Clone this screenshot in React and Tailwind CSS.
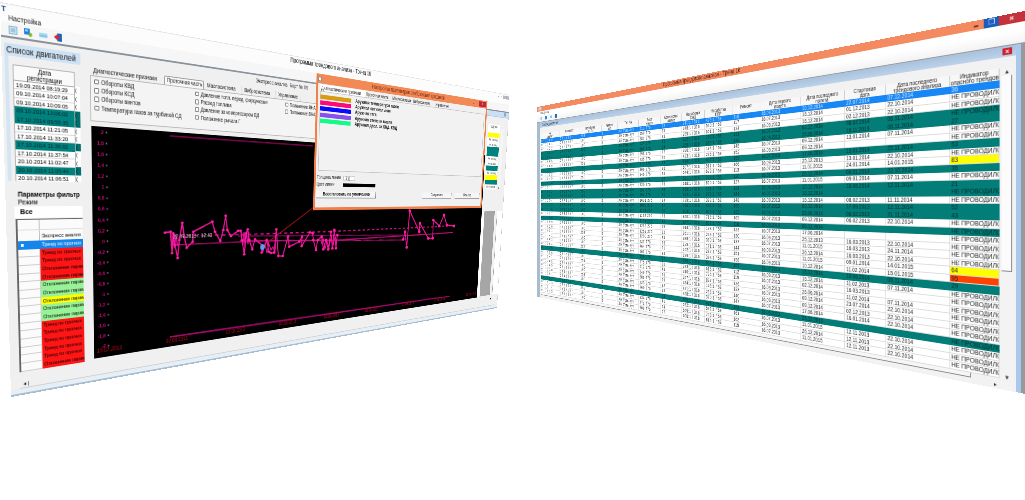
import React from "react";

/* ---------- perspective helpers ---------- */
// Builds the projective map of a w×h panel onto the quad [TL, TR, BR, BL].
function projection(w, h, [p0, p1, p2, p3]) {
  const dx1 = p1[0] - p2[0], dy1 = p1[1] - p2[1];
  const dx2 = p3[0] - p2[0], dy2 = p3[1] - p2[1];
  const sx = p0[0] - p1[0] + p2[0] - p3[0];
  const sy = p0[1] - p1[1] + p2[1] - p3[1];
  const den = dx1 * dy2 - dx2 * dy1;
  const g = (sx * dy2 - dx2 * sy) / den;
  const k = (dx1 * sy - sx * dy1) / den;
  const a = p1[0] - p0[0] + g * p1[0], b = p3[0] - p0[0] + k * p3[0], c = p0[0];
  const d = p1[1] - p0[1] + g * p1[1], e = p3[1] - p0[1] + k * p3[1], f = p0[1];
  const m = [a / w, d / w, 0, g / w, b / h, e / h, 0, k / h, 0, 0, 1, 0, c, f, 0, 1];
  return {
    css: `matrix3d(${m.map((n) => n.toFixed(10)).join(",")})`,
    toPanel: (x, y) => {
      const A = a - g * x, B = b - k * x, C = x - c;
      const D = d - g * y, E = e - k * y, F = y - f;
      const det = A * E - B * D;
      return [((C * E - B * F) / det) * w, ((A * F - D * C) / det) * h];
    },
  };
}

const LEFT = projection(960, 400, [[0, 2], [510, 95], [497, 308], [11, 397]]);
const RIGHT = projection(983, 383, [[537, 107], [1025, 11], [1025, 394], [537, 297]]);

/* ---------- left window ---------- */
const launches = [
  ["19.09.2014 08:19:29", 0, 1], ["09.10.2014 10:07:04", 0, 0], ["09.10.2014 10:09:05", 0, 0],
  ["09.10.2014 13:06:02", 1, 0], ["17.10.2014 09:55:35", 1, 0], ["17.10.2014 11:21:05", 0, 0],
  ["17.10.2014 11:33:20", 0, 0], ["17.10.2014 11:36:02", 1, 0], ["17.10.2014 11:37:54", 0, 0],
  ["20.10.2014 11:02:47", 0, 1], ["20.10.2014 11:05:44", 1, 0], ["20.10.2014 11:06:51", 0, 0],
];

const R = "bg-[#ff1515]", G = "bg-[#98f298]", Y = "bg-[#ffff00]";
const alarms = [
  [R, "Тренд по прогноз"], [R, "Тренд по прогноз"], [R, "Отклонение парам"], [R, "Отклонение парам"],
  [G, "Отклонение парам"], [G, "Отклонение парам"], [Y, "Отклонение парам"], [G, "Отклонение парам"], [G, "Отклонение парам"],
  [R, "Тренд по прогноз"], [R, "Тренд по прогноз"], [R, "Тренд по прогноз"], [R, "Тренд по прогноз"], [R, "Тренд по прогноз"], [R, "Отклонение парам"],
];

function Toolbar() {
  return (
    <div className="flex h-[13px] items-center gap-[7px] bg-[#f6f6f6] pl-[8px]">
      <svg className="h-[8px] w-[9px]" viewBox="0 0 9 8"><rect x=".5" y=".5" width="8" height="7" fill="#d4eaf5" stroke="#8db7cc" /><path d="M2 3h5M2 5h5" stroke="#6aa3c0" /></svg>
      <svg className="h-[8px] w-[9px]" viewBox="0 0 9 8"><rect width="6" height="6" fill="#1d83dd" /><rect x="1" y="1" width="3" height="2" fill="#8fd0ff" /><circle cx="6.5" cy="5.8" r="2" fill="#79b82c" /></svg>
      <svg className="h-[8px] w-[9px]" viewBox="0 0 9 8"><rect y="2" width="9" height="4.5" rx="1" fill="#a9d8f2" /><path d="M0 5h9" stroke="#5ab4e4" /></svg>
      <svg className="h-[8px] w-[9px]" viewBox="0 0 9 8"><rect x="4" width="5" height="8" fill="#1565b8" /><path d="M0 4l4-3v2h3v2h-3v2z" fill="#e8202a" /></svg>
    </div>
  );
}

function LaunchList() {
  return (
    <div className="ml-[3px] mt-[5px] flex h-[136px] w-[83px] flex-col overflow-hidden bg-[#f0f0f0]">
      <div className="h-[12px] shrink-0 bg-[#cfe2f4] pl-[2px] text-[8.6px] leading-[12px] text-[#111]">Список двигателей</div>
      <div className="flex grow border-l-[4px] border-[#d3e4f5] pl-[4px] pt-[8px]">
        <div className="w-[68px] overflow-hidden border border-b-0 border-[#b5b5b5] bg-white">
          <div className="flex h-[14.5px] flex-col items-center border-b border-[#aaa] bg-[#fafafa] text-[6.6px] leading-[7px]">
            <span>Дата</span><span>регистрации</span>
          </div>
          {launches.map(([t, teal]) => (
            <div key={t} className={`h-[8.5px] border-b pl-[2px] text-[6.2px] leading-[8.2px] ${teal ? "border-[#007f7c] bg-[#008380] text-[#022]" : "border-[#d8d8d8] text-black"}`}>{t}</div>
          ))}
        </div>
        <div className="mt-[15px] w-[6px] overflow-hidden">
          {launches.map(([t, teal]) => (
            <div key={t} className={`h-[8.5px] text-[6px] leading-[8px] ${teal ? "bg-[#00706e]" : "bg-white"}`}>(</div>
          ))}
        </div>
      </div>
    </div>
  );
}

function FilterPanel() {
  return (
    <div className="mt-[9px] h-[30px] pl-[13px]">
      <div className="text-[7.2px] font-bold leading-[9px] text-black">Параметры фильтр</div>
      <div className="text-[7px] leading-[7px]">Режим</div>
      <div className="ml-[-4px] mt-px h-[12px] bg-white pl-[6px] text-[7.5px] font-bold leading-[12px]">Все</div>
    </div>
  );
}

function AlarmTable() {
  return (
    <div className="ml-[10px] w-[76px] overflow-hidden border-l-2 border-t border-[#666] bg-[#fbfbfb]">
      <div className="flex h-[11px] border-b border-[#ddd]"><div className="w-[24px] shrink-0 border-r border-[#bbb]" /></div>
      <div className="flex h-[11px]"><div className="w-[24px] shrink-0 border-r border-[#bbb]" /><div className="pl-[2px] text-[5.8px] leading-[12px]">Экспресс анализ</div></div>
      <div className="flex h-[8.67px] bg-[#1485ea]">
        <div className="flex w-[24px] shrink-0 items-center pl-[3px]"><div className="h-[3px] w-[3px] bg-white" /></div>
        <div className="pl-[2px] text-[5.7px] leading-[8.6px] text-white">Тренд по прогноз</div>
      </div>
      {alarms.map(([c, t], i) => (
        <div key={i} className="flex h-[8.67px]">
          <div className="w-[24px] shrink-0 border-b border-r border-[#ccc]" />
          <div className={`grow pl-[2px] text-[5.6px] leading-[8.6px] text-black ${c}`}>{t}</div>
        </div>
      ))}
    </div>
  );
}

function CheckItem({ children }) {
  return (
    <div className="flex h-[9.3px] items-center gap-[3px]">
      <div className="h-[5.5px] w-[5.5px] rounded-[1px] border border-[#777] bg-white" />
      <span>{children}</span>
    </div>
  );
}

function SignTabs() {
  return (
    <div className="ml-[11px] mr-[10px] text-[6.6px] text-[#111]">
      <div className="flex h-[10px] items-center pl-[4px] leading-[10px]">
        <span className="w-[92px] text-[6.6px]">Диагностические признаки</span>
        <span className="h-[10px] w-[58px] rounded-t-[2px] border border-b-0 border-[#999] bg-[#f8f8f8] pl-[3px] leading-[8px]">Проточная часть</span>
        <span className="ml-[5px] w-[54px]">Маслосистема</span>
        <span className="w-[59px] border-l border-[#ccc] pl-[5px]">Вибросистема</span>
        <span className="border-x border-[#ccc] px-[5px]">Управление</span>
      </div>
      <div className="grid h-[49px] grid-cols-[136px_150px_200px] content-start items-start border border-[#b8b8b8] bg-[#f4f4f4] pl-[4px] pt-px">
        <div>
          <CheckItem>Обороты КВД</CheckItem><CheckItem>Обороты КСД</CheckItem><CheckItem>Обороты винтов</CheckItem>
          <CheckItem>Температура газов за турбиной СД</CheckItem>
        </div>
        <div>
          <CheckItem>Давление топл. перед. форсунками</CheckItem><CheckItem>Расход топлива</CheckItem>
          <CheckItem>Давление за компрессором ВД</CheckItem><CheckItem>Положение рычага Г</CheckItem>
        </div>
        <div><CheckItem>Положение ВНА КНД</CheckItem><CheckItem>Положение ВНА КВД</CheckItem></div>
      </div>
    </div>
  );
}

const trend = [
  [165, 232.7], [170.7, 231.7], [172, 253], [173.3, 233.3], [175, 245], [177.7, 258], [179.3, 240], [182.3, 222.7], [184.3, 236.7],
  [186.7, 247.7], [192.7, 241.7], [193.3, 231.7], [212.3, 221.7], [215, 231.7], [220.3, 241], [223.3, 230], [225.7, 215.7], [227.3, 230],
  [231, 236], [238.3, 230.7], [240.7, 230.7], [242, 240], [244.3, 254.3], [246, 233.3], [247.7, 229.3], [249.3, 240], [252.3, 249.3],
  [255, 239.3], [262, 245], [261.7, 252.7], [266.7, 240], [269, 251.7], [271, 253], [274, 252.7], [276.3, 229.3], [278.3, 256], [282.7, 256],
  [288, 236.7], [289.3, 246.7], [299.3, 241.7], [302, 236.7], [301.7, 246], [310, 232.3], [312.7, 233.3], [313.3, 240], [316, 250],
  [317.7, 240], [321.7, 236.7], [323.3, 249.3], [326, 240], [328.3, 249.3], [331, 231.7], [332.3, 248.3], [334.3, 230], [336, 248.3], [337.3, 235],
];
const trendEnd = [
  [403.3, 239.3], [405, 231.7], [406.7, 247.3], [409.7, 210.7], [419.3, 231.7], [420, 223.3], [428.3, 238.3], [432.7, 238.3], [433.3, 220],
  [439.3, 226], [444, 215], [446.7, 225], [454, 226],
];
const clusters = [
  [[170.5, 233], [172, 250], [173, 236], [174.5, 248], [176, 234], [177.5, 246]],
  [[241, 232], [243, 245], [244, 232], [245, 248], [246.5, 234], [248, 244], [249, 232]],
  [[261, 247], [263, 251], [265, 244], [267, 253], [268.5, 243], [271, 250], [273, 247], [275, 252], [276, 240]],
  [[321, 244], [323, 238], [325, 249], [327, 241], [329, 247], [331, 238], [333, 246], [335, 236], [337, 242]],
];
const dates = [[97, 353], [166, 343], [226, 333.5], [279, 325.5], [324, 318.5], [365, 312], [402, 306], [434, 301.5], [466, 296]];

function Chart() {
  const at = (x, y) => {
    const [u, v] = LEFT.toPanel(x, y);
    return [u - 98, v - 113];
  };
  const line = (pts) => pts.map(([x, y]) => at(x, y).map((n) => n.toFixed(1)).join(",")).join(" ");
  const dot = (p, i) => {
    const [x, y] = at(p[0], p[1]);
    const r = 1.9 + x / 420;
    return <ellipse key={i} cx={x} cy={y} rx={r} ry={r * 0.7} fill="#ff1fa6" />;
  };
  const [bx, by] = at(262.5, 247);
  const [lx, ly] = at(173, 236);
  return (
    <svg className="ml-[12px] mt-[3px] block h-[259.5px] w-[789px] bg-black" viewBox="0 0 789 259.5" fontFamily="Liberation Sans, sans-serif">
      {Array.from({ length: 21 }, (_, i) => (
        <g key={i} fontSize="6" fontWeight="700">
          <text x="15" y={8 + i * 12.07} textAnchor="end" fill="#d4067e">{((10 - i) / 5).toFixed(1).replace(".0", "").replace(".", ",")}</text>
          <circle cx="18.5" cy={6 + i * 12.07} r="1" fill="#777" />
        </g>
      ))}
      <polyline points={line([[170, 136], [313, 146]])} fill="none" stroke="#7c064c" strokeWidth="1.6" />
      <polyline points={line([[170, 337], [450, 296]])} fill="none" stroke="#a0086a" strokeWidth="2.2" />
      <polyline points={line([[170, 245], [260, 241], [403, 240]])} fill="none" stroke="#c00e7e" strokeWidth="1.3" />
      <polyline points={line([[240, 241], [338, 240], [453, 232.5]])} fill="none" stroke="#c00e7e" strokeWidth="1.8" />
      <polyline points={line([[238, 236], [403, 235]])} fill="none" stroke="#8d0a5e" strokeWidth="1.4" />
      <polyline points={line([[172, 236], [245, 234.5], [330, 231.5], [450, 226]])} fill="none" stroke="#cf1288" strokeWidth="1.8" strokeDasharray="6 5" />
      <polyline points={line([[314, 207], [264, 245]])} fill="none" stroke="#a31420" strokeWidth="1.4" />
      <polyline points={line(trend)} fill="none" stroke="#f0169c" strokeWidth="1.9" />
      <polyline points={line(trendEnd)} fill="none" stroke="#e0148f" strokeWidth="2.5" />
      {clusters.map((c, i) => <polyline key={i} points={line(c)} fill="none" stroke="#f0169c" strokeWidth="1.6" />)}
      {trend.map(dot)}
      {trendEnd.map(dot)}
      <circle cx={bx} cy={by} r="4" fill="#5a9cf0" />
      <text x={lx} y={ly + 3} fontSize="7" fill="#c8c8c8">22.07.2013 г. 12:43</text>
      {dates.map(([x, y], i) => {
        const [u, v] = at(x, y);
        return <text key={i} x={Math.min(u, 752)} y={v} fontSize="6.5" fill="#c00c16">{i ? "02.08.2013" : "19.07.2013"}</text>;
      })}
    </svg>
  );
}

function RightStrip() {
  return (
    <div className="flex w-[73px] flex-col border-r border-[#c5ccd4]">
      <div className="flex h-[10px] items-center justify-end border-b border-[#aac8e8] bg-[#c9dff3] pr-[8px]">
        <div className="h-[6px] w-[8px] bg-[#8ea9c6]" />
      </div>
      <div className="mt-[14px] flex h-[117px] pl-[5px]">
        <div className="w-[40px] overflow-hidden bg-white text-[6px] leading-[8.4px] text-[#555]">
          <div className="h-[15px] text-center text-[7px] leading-[7.5px] text-[#333]">Бортов</div>
          {launches.map(([t, teal, yellow]) => (
            <div key={t} className={`h-[8.5px] text-center ${teal ? "bg-[#008380]" : yellow ? "bg-[#ffff00]" : "bg-white"}`}>{teal || yellow ? "" : "Не провод"}</div>
          ))}
        </div>
        <div className="ml-[5px] flex w-[8px] flex-col justify-between bg-[#f6f6f6] text-[5px] leading-[6px] text-[#555]"><span>▲</span><span>▼</span></div>
      </div>
      <div className="mt-[40px] flex h-[160px] bg-white">
        <div className="ml-[9px] w-[34px] bg-[#a6a6a6]" />
        <div className="w-[10px] border-x border-[#999] bg-[#f2f2f2]" />
      </div>
      <div className="flex h-[12px] items-end justify-end bg-[#f0f0f0] pr-[22px] text-[6px] leading-[9px]">▸</div>
    </div>
  );
}

const series = [
  ["bg-[#d99b12]", "Аружная температура газов"], ["bg-[#ff0a78]", "Аружная оптимальная"], ["bg-[#0a0aff]", "Аружная тяга"],
  ["bg-[#8850ee]", "Аружная степени масла"], ["bg-[#14fa88]", "Аружная давл. за КНД. КВД"],
];

function SettingsDialog() {
  return (
    <div className="absolute left-[447px] top-[17.5px] flex h-[190px] w-[438px] flex-col border-[4px] border-t-0 border-[#f08048] bg-[#f0f0f0] text-[6.8px] text-[#111]">
      <div className="flex h-[13px] shrink-0 items-center bg-[#f28a56]">
        <div className="mt-[2px] h-[6px] w-[6px] border border-[#4c92c8] bg-white" />
        <div className="grow pl-[24px] text-center text-[8.6px] leading-[12px] text-[#7c2c12]">Настройка параметров отображения графиков</div>
        <div className="flex gap-[10px] pr-[3px] text-[7px] leading-[7px] text-[#6b2a12]"><span>–</span><span>▫</span></div>
        <div className="h-[9px] w-[22px] bg-[#c2263c] text-center text-[7px] leading-[8px] text-white">×</div>
      </div>
      <div className="mx-[4px] mt-[1px] flex h-[9px] items-center leading-[9px]">
        <span className="w-[97px] bg-white pl-[2px]">Диагностические признаки</span>
        <span className="w-[64px] pl-px">Проточная часть</span>
        <span className="w-[53px]">Маслосистема</span>
        <span className="w-[60px]">Вибросистема</span>
        <span>Управление</span>
      </div>
      <div className="mx-[4px] flex h-[111px] flex-col gap-[2.2px] border border-[#c4c4c4] bg-[#f2f2f2] pt-[4px] text-[7.4px] font-bold">
        {series.map(([c, t]) => (
          <div key={c} className="flex h-[6.2px] items-center"><div className={`mr-[9px] h-[6.2px] w-[65px] ${c}`} /><span className="leading-[6px] text-[#222]">{t}</span></div>
        ))}
      </div>
      <div className="ml-[2px] mt-[5px] flex h-[10px] items-center text-[7px]"><span className="w-[56px]">Толщина линии</span><span className="h-[7px] w-[26px] border border-[#ccc] bg-white pl-[4px] leading-[6px]">3 ▯</span></div>
      <div className="ml-[2px] flex h-[10px] items-center text-[7px]"><span className="w-[56px]">Цвет линии</span><span className="h-[5.5px] w-[74px] bg-black" /></div>
      <div className="mt-[4px] flex h-[10px] items-center text-center text-[7.2px] leading-[8px]">
        <span className="ml-[2px] h-[10px] w-[132px] border-b border-r border-[#777] bg-[#f6f6f6] font-bold">Восстановить по умолчанию</span>
        <span className="ml-[119px] h-[10px] w-[84px] border-b border-r border-[#888] bg-[#f6f6f6]">Сохранить</span>
        <span className="ml-[10px] h-[10px] w-[78px] border-b border-r border-[#888] bg-[#f6f6f6]">Отмена</span>
      </div>
    </div>
  );
}

function TrendWindow() {
  return (
    <div className="absolute left-0 top-0 flex h-[400px] w-[960px] origin-top-left flex-col overflow-hidden bg-[#f0f0f0]" style={{ transform: LEFT.css }}>
      <div className="flex h-[10px] shrink-0 items-center border-t border-[#e4e4e4] bg-[#fcfcfc]">
        <div className="w-[396px] pl-[1px] text-[8px] font-bold leading-[10px] text-[#1c4c94]">T</div>
        <div className="text-[8.4px] leading-[10px] text-[#111]">Программа трендового анализа - Тренд 16</div>
        <div className="ml-auto flex items-center gap-[5px] pr-[2px] text-[7px] leading-[8px] text-[#555]"><span>–</span><span>▫</span><span className="h-[6px] w-[22px] bg-[#b8bcc2] text-center leading-[6px]">×</span></div>
      </div>
      <div className="h-[8px] shrink-0 bg-[#fcfcfc] pl-[8px] text-[7px] leading-[8px] text-[#111]">Настройка</div>
      <Toolbar />
      <div className="flex h-[353px] shrink-0 border-t-2 border-[#8a9299]">
        <div className="w-[86px] overflow-hidden">
          <LaunchList />
          <FilterPanel />
          <AlarmTable />
        </div>
        <div className="w-[801px]">
          <div className="h-[16px] pl-[249px] pt-[3px] text-[7.2px] leading-[8px] text-[#111]">Экспресс анализ. Борт № 09</div>
          <SignTabs />
          <div className="h-[2px]" />
          <Chart />
        </div>
        <RightStrip />
      </div>
      <div className="mx-[10px] flex h-[9px] shrink-0 items-center border-b border-[#d0d0d0] pl-[4px] text-[6px] leading-[9px]"><span>◂</span><span className="ml-[2px] h-[5px] w-px bg-[#888]" /></div>
      <div className="h-[7px] shrink-0 border-b-2 border-[#a9bdd0] bg-[#e6eef6]" />
      <SettingsDialog />
    </div>
  );
}

/* ---------- right window ---------- */
const rowKinds = "BWWTTWWTWYTWTTWTTWTWWWWyRTWWWWWWTWWW".split("");
const edges = [541, 559.5, 580, 601.5, 618, 639, 661, 682, 705, 732.5, 760.5, 801, 845, 886, 950.5, 1000];
const columns = edges.slice(1).map((x, i) => `${(RIGHT.toPanel(x, 202)[0] - RIGHT.toPanel(edges[i], 202)[0]).toFixed(1)}px`).join(" ");
const heads = [
  ["№", "двигат"], ["Комплект", ""], ["Наработка", "СНЭ"], ["Ремонт", "кол"], ["Тип ЛА", ""], ["Борт", "номер"], ["Количество", "циклов"],
  ["Наработка", "СНЭ"], ["Наработка", "ППР"], ["Ремонт", ""], ["Дата первого", "полета"], ["Дата последнего", "полета"], ["Стартовая", "дата"],
  ["Дата последнего", "трендового анализа"], ["Индикатор", "опасного трендов"],
];
const tracking = ["tracking-[4px]", "tracking-[3.2px]", "tracking-[2px]", "", "tracking-[0.6px]", "tracking-[0.8px]", "tracking-[1px]", "tracking-[0.5px]", "tracking-[0.4px]", "tracking-[0.3px]", "", "", "", "", ""];
const lastDates = ["10.12.2014", "16.12.2014", "16.12.2014", "02.12.2014", "26.06.2014", "09.12.2014", "09.12.2014", "17.06.2014", "25.12.2013", "11.01.2015", "26.12.2014", "11.01.2015"];
const starts = ["22.07.2014", "01.12.2013", "02.12.2013", "08.02.2014", "16.11.2013", "13.01.2014", "", "13.01.2014", "13.01.2014", "24.01.2014", "06.01.2014", "09.01.2014", "16.06.2014", "", "08.02.2013", "17.09.2013", "06.02.2013", "06.02.2013", "", "", "16.03.2013", "16.03.2013", "16.03.2013", "09.01.2014", "11.02.2014", "10.06.2014", "11.02.2013", "16.03.2013", "11.02.2014", "23.07.2014", "02.12.2013", "16.01.2014", "", "12.11.2013", "12.11.2013", "12.11.2013"];
const analyses = ["07.12.2014", "22.10.2014", "22.10.2014", "06.11.2014", "06.11.2014", "07.11.2014", "", "22.11.2014", "22.10.2014", "14.01.2015", "22.10.2014", "07.11.2014", "12.11.2014", "", "11.11.2014", "12.11.2014", "21.11.2014", "22.10.2014", "", "", "22.10.2014", "24.11.2014", "22.10.2014", "14.01.2015", "15.01.2015", "06.11.2014", "07.11.2014", "", "07.11.2014", "22.10.2014", "22.10.2014", "22.10.2014", "", "22.10.2014", "22.10.2014", "22.10.2014"];
const marks = { 0: "36", 4: "27", 7: "53", 9: "83", 10: "36", 12: "21", 15: "52", 16: "43", 23: "64", 24: "95", 25: "29" };
const band = { B: "bg-[#1787f5] text-white/80", T: "bg-[#037d78] text-[#022c2b]" };

function cellsOf(i) {
  const n = (i * 37 + 113) % 900;
  return [
    `071${((i * 61 + 200) % 900) + 100}`, `07${n + 100}07`, i % 3 ? "100" : "258", "1", "АН Усть-Кут", `${400 + n} 276`, `${((i * 13) % 80) + 12}`,
    `${n + 98}:1 / 316`, `${((n * 3) % 800) + 90}:1 / 58`, `${((i * 7) % 60) + 110}`, `16.${i % 2 ? "07" : "09"}.2013`, lastDates[i % 12], starts[i], analyses[i],
    marks[i] || "НЕ ПРОВОДИЛС",
  ];
}

function EngineTable() {
  return (
    <div className="overflow-hidden bg-white">
      <div className="grid h-[12.3px] bg-[#f7f7f7] text-center text-[6.5px] leading-[6px] text-[#222]" style={{ gridTemplateColumns: columns }}>
        {heads.map(([a, b], i) => (
          <div key={i} className="overflow-hidden border-r border-[#c9c9c9]"><div>{a}</div><div>{b}</div></div>
        ))}
      </div>
      {rowKinds.map((kind, i) => (
        <div key={i} className={`grid h-[8.5px] text-[6.8px] leading-[8px] ${band[kind] || "text-[#222]"}`} style={{ gridTemplateColumns: columns }}>
          {cellsOf(i).map((t, j) => (
            <div
              key={j}
              className={`overflow-hidden ${tracking[j]} ${j === 14 ? "pl-px text-[7px]" : "pl-[2px]"} ${band[kind] ? "" : "border-b border-r border-[#dcdcdc]"} ${j === 14 && (kind === "Y" || kind === "y") ? "bg-[#ffff00]" : ""} ${j === 14 && kind === "R" ? "bg-[#ff4200]" : ""}`}
            >
              {t}
            </div>
          ))}
        </div>
      ))}
    </div>
  );
}

function ListWindow() {
  return (
    <div className="absolute left-0 top-0 flex h-[383px] w-[983px] origin-top-left flex-col overflow-hidden bg-white" style={{ transform: RIGHT.css }}>
      <div className="flex h-[9.5px] shrink-0 items-center bg-[#f38a60]">
        <div className="w-[405px] pl-[6px]"><div className="h-[6px] w-[12px] bg-[#cfd8dd]" /></div>
        <div className="text-[8.8px] leading-[9px] text-[#3c1a10]">Программа трендового анализа - Тренд 16</div>
        <div className="ml-auto mr-[6px] mt-[2px] h-[2px] w-[5px] bg-[#7a3c24]" />
        <div className="h-[9.5px] w-[16px] bg-[#1b5cc0] text-center text-[8px] leading-[9px] text-white">❐</div>
        <div className="h-[9.5px] w-[27px] bg-[#c4333c] text-center text-[8px] font-bold leading-[9px] text-white">×</div>
      </div>
      <div className="h-[8px] shrink-0 pl-[14px] text-[7px] leading-[8px] text-[#555]">Настройка</div>
      <div className="flex h-[13.5px] shrink-0 items-center gap-[10px] bg-gradient-to-b from-white to-[#f3f3f3] pl-[14px]">
        <div className="h-[7px] w-[7px] bg-[#a8cfe2]" /><div className="h-[7px] w-[9px] bg-[#2a86cf]" /><div className="h-[5px] w-[9px] bg-[#8fcbe8]" /><div className="h-[7px] w-[9px] bg-[#2f6a9c]" />
      </div>
      <div className="flex grow border-r-[4px] border-t border-[#97999c]">
        <div className="flex grow flex-col border-l-[12px] border-r-[5px] border-l-[#a9bccd] border-r-[#a8c9ec] bg-[#f2f2f2]">
          <div className="flex h-[11px] shrink-0 items-center justify-between bg-gradient-to-b from-[#a9c1dc] to-[#bcd2ea] pl-[8px] pr-[4px]">
            <span className="text-[7px] leading-[10px] text-[#345]">Список двигателей</span>
            <span className="h-[7px] w-[10px] bg-[#cc2230] text-center text-[7px] font-bold leading-[7px] text-white">×</span>
          </div>
          <div className="flex grow pl-[4px] pt-[10.5px]">
            <div>
              <EngineTable />
              <div className="mr-[31px] h-[5px] border-b border-r border-[#888] bg-[#f6f6f6]" />
            </div>
            <div className="ml-[2px] flex w-[11px] flex-col bg-[#f3f3f3] text-[6px] leading-[8px] text-[#333]">
              <span className="text-center">▲</span>
              <div className="h-[200px] border-b border-r border-[#888] bg-[#fbfbfb]" />
              <span className="mt-auto pb-px text-center">▼</span>
              <span className="-ml-[8px]">▸</span>
            </div>
          </div>
        </div>
      </div>
    </div>
  );
}

export default function App() {
  return (
    <div className="relative h-[500px] w-[1025px] overflow-hidden whitespace-nowrap bg-white font-['Liberation_Sans',sans-serif]">
      <TrendWindow />
      <ListWindow />
    </div>
  );
}
